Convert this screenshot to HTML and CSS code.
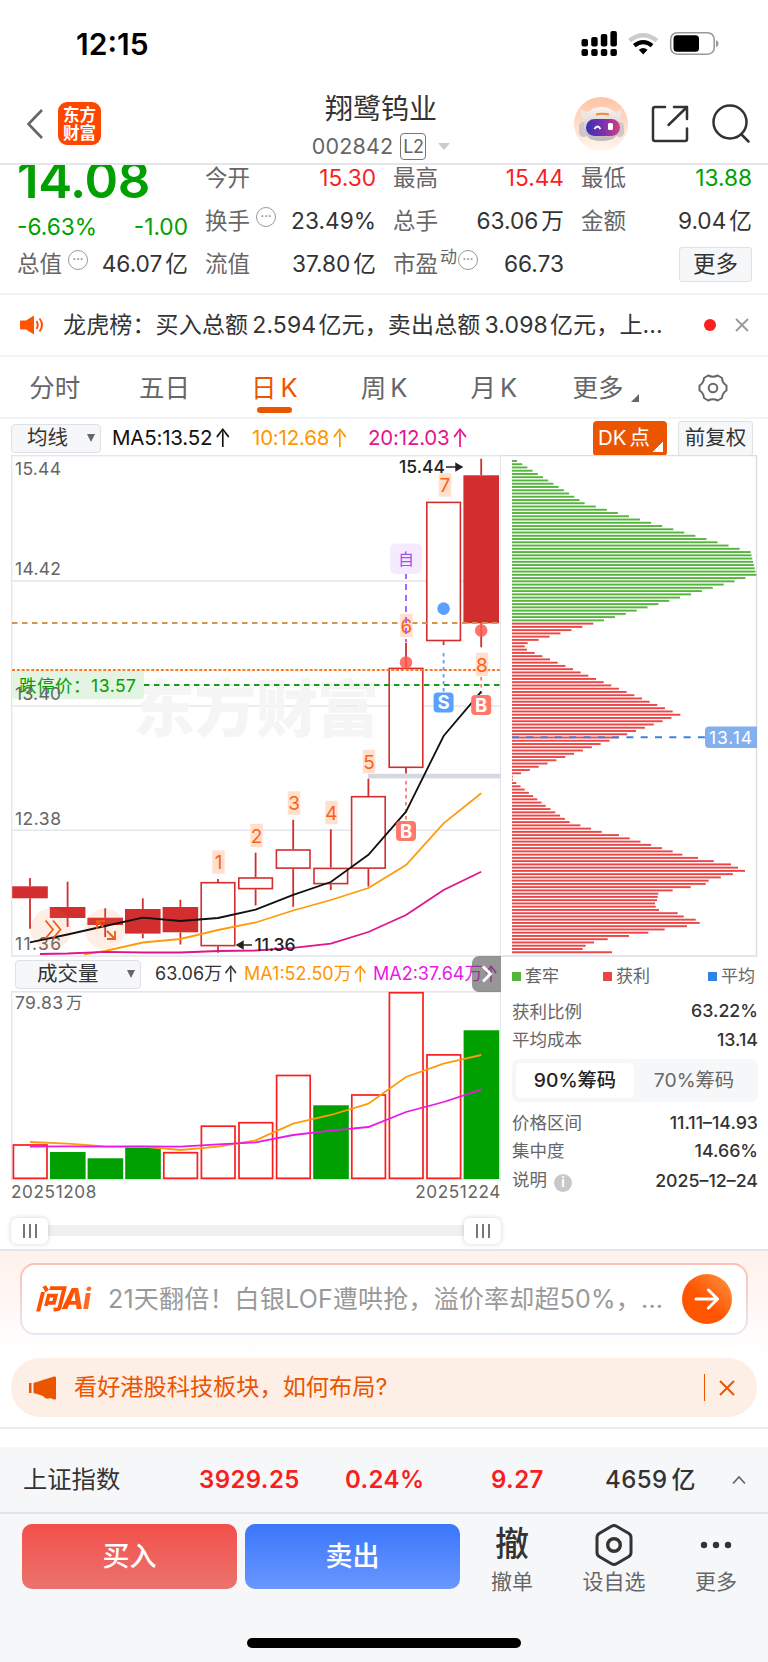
FILE: index.html
```html
<!DOCTYPE html>
<html lang="zh-CN">
<head>
    <meta charset="UTF-8">
    <meta name="viewport" content="width=device-width, initial-scale=1.0">
    <title>翔鹭钨业 002842</title>
    <link rel="stylesheet" href="styles.css">
</head>
<body>

    <div class="status-bar">
        <span class="clock">12:15</span>
        <svg class="status-icons" width="140" height="30" viewBox="580 29 140 30">
            <g fill="#000">
                <rect x="581.5" y="39" width="6.5" height="7.5" rx="2"/><rect x="591.2" y="37" width="6.5" height="9.5" rx="2"/>
                <rect x="600.8" y="34" width="6.5" height="12.5" rx="2"/><rect x="610.4" y="31" width="6.5" height="15.5" rx="2"/>
                <rect x="581.5" y="49" width="6.5" height="7" rx="2"/><rect x="591.2" y="49" width="6.5" height="7" rx="2"/>
                <rect x="600.8" y="49" width="6.5" height="7" rx="2"/><rect x="610.4" y="49" width="6.5" height="7" rx="2"/>
                <path d="M643.2 54.5l-4.4-4.7q4.4-3.4 8.8 0z"/>
            </g>
            <path d="M629.5 40.5q13.7-10.5 27.4 0" fill="none" stroke="#ccc" stroke-width="4.2"/>
            <path d="M634.3 45.7q8.9-7.2 17.8 0" fill="none" stroke="#000" stroke-width="4.2"/>
            <rect x="670.7" y="32.7" width="43.5" height="21.5" rx="6.5" fill="none" stroke="#999" stroke-width="1.6"/>
            <rect x="673.5" y="35.3" width="25.5" height="16.5" rx="3.5"/>
            <path d="M716 40q2.6 1 2.6 3.6t-2.6 3.6z" fill="#999"/>
        </svg>
    </div>

    <header class="nav">
        <div class="nav-left">
            <svg width="18" height="32" viewBox="0 0 18 32"><path d="M16 2L2.5 16 16 30" fill="none" stroke="#666" stroke-width="2.6"/></svg>
            <div class="logo"><span>东方</span><span>财富</span></div>
        </div>
        <div class="nav-title">
            <h1>翔鹭钨业</h1>
            <div class="code">002842<span class="level">L2</span><i class="caret"></i></div>
        </div>
        <div class="nav-right">
            <svg width="54" height="54" viewBox="0 0 54 54">
                <defs>
                    <linearGradient id="halo" x1="0" y1="0" x2="0" y2="1"><stop offset="0" stop-color="#ffc3a3"/><stop offset="1" stop-color="#fff6f1"/></linearGradient>
                    <linearGradient id="head" x1="0" y1="0" x2="0" y2="1"><stop offset="0" stop-color="#fbf6f3"/><stop offset="1" stop-color="#bdb6b8"/></linearGradient>
                    <linearGradient id="visor" x1="0" y1="0" x2="1" y2="0"><stop offset="0" stop-color="#3a32b0"/><stop offset="0.5" stop-color="#7a2fae"/><stop offset="1" stop-color="#d8407e"/></linearGradient>
                </defs>
                <circle cx="27" cy="27" r="27" fill="url(#halo)"/>
                <path d="M7 11q-2 7 3 12l7-9q-8 2-10-3zM47 11q2 7-3 12l-7-9q8 2 10-3z" fill="#efe6e4"/>
                <rect x="5" y="25" width="9" height="15" rx="4.5" fill="#cfc8cb"/><rect x="41" y="25" width="9" height="15" rx="4.500" fill="#cfc8cb"/>
                <path d="M27.500 10C15 10 10 19 10 29s5 15 17.500 15S45 39 45 29 40 10 27.500 10z" fill="url(#head)"/>
                <rect x="12" y="22" width="34" height="17" rx="8.500" fill="url(#visor)"/>
                <path d="M22 17.500q6-1.500 13 0" stroke="#f58a2e" stroke-width="2.200" fill="none"/>
                <path d="M20.500 32q3-5 6 0" stroke="#fff" stroke-width="1.800" fill="none"/>
                <rect x="34" y="26" width="5" height="7" rx="1.500" fill="#fff"/>
            </svg>
            <svg width="38" height="38" viewBox="0 0 38 38" fill="none" stroke="#333" stroke-width="2.5" stroke-linecap="round" stroke-linejoin="round">
                <path d="M14 2H4a2 2 0 0 0-2 2v30a2 2 0 0 0 2 2h30a2 2 0 0 0 2-2V23.500M23 2h13v12M36 2L17.500 20"/>
            </svg>
            <svg width="39" height="39" viewBox="0 0 39 39" fill="none" stroke="#333" stroke-width="2.5" stroke-linecap="round">
                <circle cx="18" cy="18" r="16.500"/><path d="M29.500 30.500l7 7"/>
            </svg>
        </div>
    </header>

    <section class="quote">
        <div class="price-col">
            <div class="price green">14.08</div>
            <div class="pair change green"><span>-6.63%</span><span>-1.00</span></div>
            <div class="pair"><label>总值<i class="more-dot">···</i></label><span>46.07<em>亿</em></span></div>
        </div>
        <div class="quote-col">
            <div class="pair"><label>今开</label><span class="red">15.30</span></div>
            <div class="pair"><label>换手<i class="more-dot">···</i></label><span>23.49%</span></div>
            <div class="pair"><label>流值</label><span>37.80<em>亿</em></span></div>
        </div>
        <div class="quote-col">
            <div class="pair"><label>最高</label><span class="red">15.44</span></div>
            <div class="pair"><label>总手</label><span>63.06<em>万</em></span></div>
            <div class="pair"><label>市盈<sup>动</sup><i class="more-dot tight">···</i></label><span>66.73</span></div>
        </div>
        <div class="quote-col">
            <div class="pair"><label>最低</label><span class="green">13.88</span></div>
            <div class="pair"><label>金额</label><span>9.04<em>亿</em></span></div>
            <div class="pair end"><button class="box-btn">更多</button></div>
        </div>
    </section>

    <section class="ticker">
        <svg width="24" height="22" viewBox="0 0 24 22"><path d="M1 6.500h5L14 1.500v19l-8-5H1q-1 0-1-1v-7q0-1 1-1z" fill="#f50"/><path d="M16.500 7q2.500 4 0 8M19.500 4.500q5 6.500 0 13" fill="none" stroke="#f50" stroke-width="2"/></svg>
        <p>龙虎榜：买入总额<b>2.594</b>亿元，卖出总额<b>3.098</b>亿元，上...</p>
        <i class="dot"></i>
        <svg width="14" height="14" viewBox="0 0 14 14"><path d="M1 1l12 12M13 1L1 13" stroke="#999" stroke-width="1.800"/></svg>
    </section>

    <nav class="tabs">
        <span>分时</span>
        <span>五日</span>
        <span class="active">日<b>K</b></span>
        <span>周<b>K</b></span>
        <span>月<b>K</b></span>
        <span class="more">更多<i class="corner"></i></span>
        <span><svg width="30" height="30" viewBox="0 0 30 30" fill="none" stroke="#666" stroke-width="2"><path d="M10.200 2.500Q15 5 19.800 2.500L24 5Q24.300 10 28.500 12.500V17.500Q24.300 20 24 25L19.800 27.500Q15 25 10.200 27.500L6 25Q5.700 20 1.500 17.500V12.500Q5.700 10 6 5Z" stroke-linejoin="round"/><circle cx="15" cy="15" r="4.300"/></svg></span>
    </nav>

    <section class="ma-bar">
        <button class="select">均线<i></i></button>
        <span class="ma5">MA5:13.52<i class="up">↑</i></span>
        <span class="ma10">10:12.68<i class="up">↑</i></span>
        <span class="ma20">20:12.03<i class="up">↑</i></span>
        <button class="dk">DK<em>点</em></button>
        <button class="box-btn adj">前复权</button>
    </section>

    <main class="charts">
        <div class="left">
            <svg id="kline" width="490" height="502" viewBox="11 455 490 502"></svg>
            <div class="vol-head">
                <button class="select wide">成交量<i></i></button>
                <span class="v0">63.06万<i class="up">↑</i></span>
                <span class="v1">MA1:52.50万<i class="up">↑</i></span>
                <span class="v2">MA2:37.64万<i class="up">↑</i></span>
                <div class="next"><svg width="12" height="18" viewBox="0 0 12 18"><path d="M2 1.500L9.500 9 2 16.500" fill="none" stroke="#fff" stroke-width="2.800"/></svg></div>
            </div>
            <svg id="volume" width="490" height="190" viewBox="11 991 490 190"></svg>
            <div class="dates"><span>20251208</span><span>20251224</span></div>
            <div class="slider"><i class="handle"></i><i class="handle"></i></div>
        </div>

        <div class="right">
            <svg id="chips" width="257" height="502" viewBox="501 455 257 502"></svg>
            <div class="legend">
                <span><i class="bg-green"></i>套牢</span>
                <span><i class="bg-red"></i>获利</span>
                <span><i class="bg-blue"></i>平均</span>
            </div>
            <div class="stat"><label>获利比例</label><b>63.22%</b></div>
            <div class="stat"><label>平均成本</label><b>13.14</b></div>
            <div class="segment"><span class="on">90%筹码</span><span>70%筹码</span></div>
            <div class="stat"><label>价格区间</label><b>11.11–14.93</b></div>
            <div class="stat"><label>集中度</label><b>14.66%</b></div>
            <div class="stat last"><label>说明<i class="info">i</i></label><b>2025–12–24</b></div>
        </div>
    </main>

    <section class="ai">
        <div class="ai-box">
            <span class="ai-logo">问Ai</span>
            <p>21天翻倍！白银LOF遭哄抢，溢价率却超50%，...</p>
            <div class="go"><svg width="26" height="22" viewBox="0 0 26 22" fill="none" stroke="#fff" stroke-width="3" stroke-linecap="round" stroke-linejoin="round"><path d="M2 11h21M14.500 2L23.500 11l-9 9"/></svg></div>
        </div>
    </section>

    <section class="promo">
        <svg width="28" height="24" viewBox="0 0 28 24" fill="#eb5500"><rect x="0" y="7" width="2.500" height="10"/><path d="M4.500 7L25 0.500Q27 0 27 1.500V22.500Q27 24 25 23.500L21 22Q17 24 14 20L8 18 4.500 17z"/></svg>
        <p>看好港股科技板块，如何布局?</p>
        <i class="bar"></i>
        <svg width="16" height="16" viewBox="0 0 16 16"><path d="M1 1l14 14M15 1L1 15" stroke="#eb5500" stroke-width="1.900"/></svg>
    </section>

    <footer>
        <div class="index-row">
            <span class="name">上证指数</span>
            <b class="red i1">3929.25</b>
            <b class="red i2">0.24%</b>
            <b class="red i3">9.27</b>
            <b class="i4">4659<em>亿</em></b>
            <svg width="14" height="10" viewBox="0 0 14 10"><path d="M1 8.500L7 2l6 6.500" fill="none" stroke="#666" stroke-width="1.800"/></svg>
        </div>
        <div class="actions">
            <button class="buy">买入</button>
            <button class="sell">卖出</button>
            <div class="act"><strong>撤</strong><span>撤单</span></div>
            <div class="act">
                <svg width="40" height="44" viewBox="0 0 40 44" fill="none" stroke="#333" stroke-linejoin="round"><path d="M17.500 3.300q2.500-1.400 5 0L34.500 10.300q2.500 1.500 2.500 4.200v15q0 2.700-2.500 4.200L22.500 40.700q-2.500 1.400-5 0L5.500 33.700Q3 32.200 3 29.500v-15q0-2.700 2.500-4.200z" stroke-width="3"/><circle cx="20" cy="22" r="6.300" stroke-width="3.400"/></svg>
                <span>设自选</span>
            </div>
            <div class="act">
                <svg width="40" height="44" viewBox="0 0 40 44" fill="#333"><circle cx="8" cy="22" r="3.200"/><circle cx="20" cy="22" r="3.200"/><circle cx="32" cy="22" r="3.200"/></svg>
                <span>更多</span>
            </div>
        </div>
        <div class="home"></div>
    </footer>

    <script src="script.js"></script>
</body>
</html>
```

FILE: styles.css
```css
* {
    box-sizing: border-box;
    margin: 0;
    padding: 0;
}

body {
    width: 768px;
    background: #fff;
    color: #333;
    font-family: Inter, 'Noto Sans CJK SC', sans-serif;
    font-size: 23px;
    line-height: 1;
}

button {
    font: inherit;
    color: inherit;
    border: none;
}

i, em {
    font-style: normal;
}

svg {
    display: block;
    flex: none;
}

.red { color: #fa1e1e; }
.green { color: #00a000; }

.up {
    display: inline-block;
    margin-left: 2px;
    transform: scaleY(1.25);
}

/* status bar + nav */
.status-bar {
    height: 82px;
    padding: 29px 48px 0 76px;
    display: flex;
    justify-content: space-between;
}

.clock {
    font-size: 30px;
    font-weight: 600;
    line-height: 30px;
    color: #000;
}

.nav {
    height: 83px;
    padding: 0 17px 0 26px;
    display: grid;
    grid-template-columns: 275px 160px 1fr;
    border-bottom: 2px solid #e6e6e8;
}

.nav-left {
    display: flex;
    align-items: center;
    gap: 14px;
    height: 83px;
}

.logo {
    width: 43px;
    height: 43px;
    border-radius: 9px;
    background: #ff4600;
    color: #fff;
    font-size: 16.5px;
    font-weight: 700;
    display: flex;
    flex-direction: column;
    align-items: center;
    justify-content: center;
    line-height: 18px;
}

.nav-title {
    display: flex;
    flex-direction: column;
    align-items: center;
    white-space: nowrap;
}

.nav-title h1 {
    font-size: 28px;
    font-weight: 400;
    line-height: 36px;
    margin-top: 9px;
}

.code {
    display: flex;
    align-items: center;
    font-size: 21.5px;
    color: #666;
    letter-spacing: 0.2px;
    margin-top: 6px;
}

.level {
    width: 26px;
    height: 27px;
    border: 1.5px solid #777;
    border-radius: 4px;
    margin-left: 7px;
    display: grid;
    place-items: center;
    font-size: 18px;
    letter-spacing: -0.5px;
}

.caret {
    border: 6.5px solid transparent;
    border-top: 7px solid #ccc;
    border-bottom: none;
    margin-left: 12px;
}

.nav-right {
    display: flex;
    align-items: center;
    justify-content: flex-end;
    gap: 23px;
    height: 83px;
}

/* quote */
.quote {
    height: 130px;
    padding: 0 16px 0 17px;
    display: grid;
    grid-template-columns: repeat(4, 1fr);
    gap: 17px;
    overflow: hidden;
    border-bottom: 2px solid #f3f4f6;
}

.pair {
    height: 43px;
    display: flex;
    align-items: center;
    justify-content: space-between;
    white-space: nowrap;
}

.quote-col,
.price-col {
    margin-top: -8px;
}

.price {
    font-size: 51px;
    font-weight: 600;
    height: 43px;
    line-height: 45px;
    letter-spacing: -0.4px;
}

.pair.change {
    height: 49px;
    padding-top: 6px;
    margin-bottom: -6px;
}

.pair label {
    color: #666;
    display: flex;
    align-items: center;
    font-size: 22.5px;
}

.pair span {
    font-size: 22.7px;
}

.pair em {
    margin-left: 3px;
}

.pair.end {
    justify-content: flex-end;
}

.more-dot {
    width: 20px;
    height: 20px;
    border: 1.6px solid #999;
    border-radius: 50%;
    margin: 0 0 10px 6px;
    color: #888;
    font-size: 11px;
    font-weight: 700;
    display: grid;
    place-items: center;
    line-height: 1;
}

.more-dot.tight {
    margin-left: 1px;
}

.pair sup {
    font-size: 17px;
    margin-bottom: 14px;
    margin-left: 2px;
}

.box-btn {
    width: 73px;
    height: 35px;
    background: #f6f7f9;
    border: 1.5px solid #dfe1e6;
    border-radius: 3px;
    font-size: 22.5px;
}

/* ticker */
.ticker {
    height: 62px;
    padding: 0 19px 0 20px;
    display: flex;
    align-items: center;
    border-bottom: 2px solid #f3f4f6;
}

.ticker p {
    flex: 1;
    margin-left: 19px;
    font-size: 23px;
    letter-spacing: 0.15px;
    white-space: nowrap;
}

.ticker b {
    font-weight: 400;
    margin: 0 2px 0 4px;
}

.dot {
    width: 12px;
    height: 12px;
    border-radius: 50%;
    background: #fa1e1e;
    margin-right: 19px;
}

/* tabs */
.tabs {
    height: 62px;
    display: grid;
    grid-template-columns: repeat(7, 1fr);
    border-bottom: 2px solid #f3f4f6;
    color: #666;
    font-size: 25.5px;
}

.tabs span {
    display: flex;
    align-items: center;
    justify-content: center;
    position: relative;
    padding-top: 2px;
}

.tabs b {
    font-weight: 400;
    margin-left: 4px;
}

.tabs .more {
    padding-left: 5px;
}

.tabs .active {
    color: #eb5500;
}

.tabs .active::after {
    content: '';
    position: absolute;
    left: 38px;
    bottom: 4px;
    width: 35px;
    height: 6px;
    border-radius: 3px;
    background: #eb5500;
}

.corner {
    border: 4px solid #666;
    border-left-color: transparent;
    border-top-color: transparent;
    margin: 20px 0 0 8px;
}

/* ma legend */
.ma-bar {
    height: 36px;
    padding: 2px 15px 0 11px;
    display: flex;
    align-items: center;
    font-size: 20.5px;
    white-space: nowrap;
}

.select {
    width: 90px;
    height: 29px;
    background: #f6f7f9;
    border: 1.5px solid #dfe1e6;
    border-radius: 4px;
    font-size: 20.5px;
    display: flex;
    align-items: center;
    justify-content: space-between;
    padding: 0 5px 0 15px;
}

.select i {
    border: 4.5px solid transparent;
    border-top: 8px solid #666;
    border-bottom: none;
}

.ma5, .ma10, .ma20 {
    letter-spacing: -0.2px;
}

.ma5 { width: 140px; margin-left: 11px; color: #111; }
.ma10 { width: 116px; color: #ff9600; }
.ma20 { flex: 1; color: #e6148c; }

.dk {
    width: 74px;
    height: 35px;
    border-radius: 4px;
    background: linear-gradient(135deg, transparent 50%, #fff 50%) right 4px bottom 4px / 10px 10px no-repeat #eb5500;
    color: #fff;
    font-size: 20.5px;
    text-align: left;
    padding-left: 5px;
}

.dk em {
    margin-left: 3px;
}

.box-btn.adj {
    width: 75px;
    font-size: 20.5px;
    margin-left: 11px;
}

/* charts */
.charts {
    display: grid;
    grid-template-columns: 490px 257px;
    padding-left: 11px;
    height: 796px;
    border-bottom: 2px solid #e4e5ea;
}

.vol-head {
    height: 34px;
    display: flex;
    align-items: center;
    position: relative;
    font-size: 18px;
    white-space: nowrap;
}

.vol-head .up {
    margin-left: 1px;
}

.select.wide {
    width: 126px;
    margin-left: 4px;
    padding-left: 21px;
}

.v0 { width: 89px; margin-left: 14px; }
.v1 { width: 129px; color: #ff9600; }
.v2 { color: #e619e6; }

.next {
    position: absolute;
    right: 0;
    top: -1px;
    width: 29px;
    height: 36px;
    border-radius: 7px 0 0 7px;
    background: rgba(80, 80, 80, 0.6);
    display: grid;
    place-items: center;
}

.dates {
    height: 24px;
    display: flex;
    align-items: center;
    justify-content: space-between;
    padding-bottom: 3px;
    font-size: 17.2px;
    color: #666;
    letter-spacing: 0.6px;
}

.slider {
    height: 11px;
    margin-top: 20px;
    background: #f0f0f3;
    display: flex;
    align-items: center;
    justify-content: space-between;
}

.handle {
    width: 37px;
    height: 26px;
    border-radius: 6px;
    background: linear-gradient(#777, #777) 12px 6px / 2px 14px no-repeat,
        linear-gradient(#777, #777) 18px 6px / 2px 14px no-repeat,
        linear-gradient(#777, #777) 24px 6px / 2px 14px no-repeat, #fff;
    box-shadow: 0 0 5px rgba(0, 0, 0, 0.18);
}

svg text {
    font-family: Inter, 'Noto Sans CJK SC', sans-serif;
}

.right {
    font-size: 17.5px;
    color: #666;
}

.legend, .stat {
    margin-left: 11px;
    display: flex;
    align-items: center;
    justify-content: space-between;
    height: 28.6px;
}

.legend {
    display: grid;
    grid-template-columns: 91px 105px auto;
    justify-content: start;
    height: 38px;
    margin-bottom: 2px;
}

.legend span {
    display: flex;
    align-items: center;
    font-size: 17px;
}

.legend i {
    width: 9px;
    height: 9px;
    margin-right: 4px;
}

.bg-green { background: #55b43c; }
.bg-red { background: #eb4646; }
.bg-blue { background: #2d82e6; }

.stat b {
    font-weight: 500;
    font-size: 17.8px;
    color: #333;
}

.stat.last {
    height: 32px;
}

.info {
    display: inline-grid;
    place-items: center;
    width: 18px;
    height: 18px;
    border-radius: 50%;
    background: #c8c8c8;
    color: #fff;
    font-size: 13px;
    font-weight: 700;
    margin-left: 7px;
    vertical-align: -1px;
}

.segment {
    margin: 5px 0 6px 11px;
    height: 43px;
    padding: 4px;
    border-radius: 7px;
    background: #f6f7f9;
    display: grid;
    grid-template-columns: 118px 1fr;
    font-size: 19.3px;
}

.segment span {
    display: grid;
    place-items: center;
    border-radius: 5px;
}

.segment .on {
    background: #fff;
    color: #222;
    font-weight: 500;
}

/* ai search */
.ai {
    height: 107px;
    padding: 12px 20px 0;
    background: linear-gradient(#fff1ec, #fff);
}

.ai-box {
    height: 72px;
    padding: 0 14px 0 13px;
    border: 2px solid transparent;
    border-radius: 15px;
    background: linear-gradient(#fff, #fff) padding-box, linear-gradient(#ffbeb2, #e3e9f8) border-box;
    display: flex;
    align-items: center;
}

.ai-logo {
    width: 73px;
    font-size: 28px;
    font-weight: 800;
    font-style: italic;
    letter-spacing: -0.8px;
    white-space: nowrap;
    background: linear-gradient(90deg, #ff5000 50%, #ff8c50);
    -webkit-background-clip: text;
    color: transparent;
    line-height: 36px;
}

.ai-box p {
    flex: 1;
    font-size: 25px;
    letter-spacing: 0.2px;
    color: #999;
    white-space: nowrap;
}

.go {
    width: 50px;
    height: 50px;
    border-radius: 50%;
    background: linear-gradient(45deg, #ff5500 45%, #ff9646);
    display: grid;
    place-items: center;
}

/* promo */
.promo {
    height: 59px;
    margin: 0 11px;
    padding: 0 22px 0 18px;
    border-radius: 29px;
    background: #fdeee6;
    color: #eb5500;
    display: flex;
    align-items: center;
}

.promo p {
    flex: 1;
    margin-left: 17px;
    font-size: 23.2px;
}

.bar {
    width: 1.5px;
    height: 27px;
    background: #eb5500;
    margin-right: 14px;
}

/* bottom */
footer {
    height: 235px;
    margin-top: 10px;
    padding-top: 18px;
    border-top: 2px solid #ececee;
    background: #f6f7f9;
    background-clip: content-box;
}

.index-row {
    height: 67px;
    padding: 0 22px 0 23px;
    border-bottom: 2px solid #e2e3e6;
    display: flex;
    align-items: center;
    font-size: 24px;
}

.index-row b {
    font-weight: 600;
    letter-spacing: 0.4px;
}

.index-row em {
    font-weight: 500;
    margin-left: 4px;
}

.name { width: 176px; font-size: 24.3px; }
.i1 { width: 146px; }
.i2 { width: 146px; }
.i3 { width: 114px; }
.i4 { flex: 1; }

.index-row .i4 {
    font-weight: 500;
}

.actions {
    padding: 10px 0 0 22px;
    display: grid;
    grid-template-columns: 215px 215px 102px 102px 102px;
    height: 124px;
}

.actions button {
    width: 215px;
    height: 65px;
    border-radius: 10px;
    color: #fff;
    font-size: 27px;
    font-weight: 500;
}

.actions .buy {
    background: linear-gradient(#f2504a, #ec736e);
}

.actions .sell {
    margin-left: 8px;
    background: linear-gradient(#3a76fa, #6a97ff);
}

.act {
    display: flex;
    flex-direction: column;
    align-items: center;
    font-size: 21px;
    color: #666;
    white-space: nowrap;
    margin-left: 17px;
    width: 86px;
}

.act strong {
    height: 43px;
    line-height: 40px;
    font-size: 34px;
    font-weight: 500;
    color: #333;
}

.act svg {
    margin-top: -1px;
}

.act span {
    margin-top: 4px;
}

.home {
    width: 274px;
    height: 10px;
    border-radius: 5px;
    background: #000;
    margin: 0 auto;
}
```

FILE: script.js
```javascript
const kline = document.getElementById('kline');
const volume = document.getElementById('volume');
const chips = document.getElementById('chips');

const X0 = 30;
const STEP = 37.6;
const HALF = 17.8;
const cx = i => X0 + STEP * i;

const rect = (x, y, w, h, attrs) => `<rect x="${x}" y="${y}" width="${w}" height="${h}" ${attrs}/>`;
const line = (x1, y1, x2, y2, attrs) => `<line x1="${x1}" y1="${y1}" x2="${x2}" y2="${y2}" ${attrs}/>`;
const text = (x, y, s, attrs) => `<text x="${x}" y="${y}" ${attrs}>${s}</text>`;
const poly = (pts, color) => `<polyline points="${pts.map(p => p.join(',')).join(' ')}" fill="none" stroke="${color}" stroke-width="1.8"/>`;
const series = (ys, from = 0) => ys.map((y, i) => [cx(i + from), y]);

// high, body top, body bottom, low, filled
const candles = [
    [878, 886.3, 898.3, 928.7, 1],
    [881.7, 907, 918, 927, 1],
    [908.3, 917.7, 925, 937, 1],
    [898.3, 909, 933.6, 938.3, 1],
    [899.7, 907, 932.3, 944.5, 1],
    [879, 882, 946.3, 952.8, 0],
    [852.7, 877.3, 889.3, 905.5, 0],
    [819.8, 849.3, 868.8, 906.8, 0],
    [829.3, 867.7, 884.3, 890, 0],
    [778.7, 796, 868.8, 886.5, 0],
    [642.7, 667.7, 768, 773.5, 0],
    [501.7, 501.7, 641.2, 645, 0],
    [458.7, 475.3, 623.3, 647.3, 1]
];

function drawKline() {
    const grid = 'stroke="#e4e6ee" stroke-width="1.6"';
    let s = '';
    s += rect(11.6, 455.6, 489, 500.4, `fill="none" ${grid}`);
    [581, 706, 830.3].forEach(y => s += line(11, y, 501, y, grid));

    s += text(133, 732, '东方财富', 'font-size="62" font-weight="900" fill="#f5f5f6" textLength="246"');
    s += rect(368, 773.8, 133, 4.6, 'fill="#d5d8de"');

    s += rect(12, 671, 132, 28, 'rx="3" fill="#e3f4e3"');
    s += text(19, 691.5, '跌停价：13.57', 'font-size="17.5" fill="#00a000" textLength="117"');

    const label = 'font-size="17.5" fill="#666" textLength="46"';
    [['15.44', 475], ['14.42', 575], ['13.40', 700], ['12.38', 825], ['11.36', 950]].forEach(l => s += text(15, l[1], l[0], label));

    candles.forEach(([hi, top, bot, lo, fill], i) => {
        const x = cx(i);
        s += line(x, hi, x, top, 'stroke="#d22d2f" stroke-width="1.8"');
        s += line(x, bot, x, lo, 'stroke="#d22d2f" stroke-width="1.8"');
        if (fill) {
            s += rect(x - HALF, top, HALF * 2, bot - top, 'fill="#d22d2f"');
        } else {
            s += rect(x - HALF + 1, top + 0.7, HALF * 2 - 2, bot - top - 1.4, 'fill="#fff" stroke="#d22d2f" stroke-width="1.6"');
        }
    });

    // limit and cost lines
    s += line(12, 623, 501, 623, 'stroke="#d29650" stroke-width="1.8" stroke-dasharray="5.500 4.500"');
    s += line(12, 670, 501, 670, 'stroke="#ff7828" stroke-width="1.8" stroke-dasharray="3 1.800"');
    s += line(144, 685, 501, 685, 'stroke="#14a014" stroke-width="1.8" stroke-dasharray="5.500 4.500"');
    s += line(443.6, 653, 443.6, 693, 'stroke="#5aa0ff" stroke-width="1.8" stroke-dasharray="3.500 3.500"');
    s += line(406, 781, 406, 822, 'stroke="#ff7864" stroke-width="1.8" stroke-dasharray="3.500 3.500"');
    s += line(481.2, 656, 481.2, 694, 'stroke="#ff7864" stroke-width="1.8" stroke-dasharray="3.500 3.500"');

    // sequence numbers
    [[218.5, 862], [256.5, 835.5], [294, 803], [331.5, 812.5], [369, 761.5], [406.5, 625.5], [445, 485], [482, 664.5]].forEach(([x, y], i) => {
        s += rect(x - 6.2, y - 11.7, 12.4, 23.4, 'fill="#ffdcc8" fill-opacity="0.9"');
        s += text(x, y + 7, i + 1, 'font-size="19" fill="#ff5f14" text-anchor="middle"');
    });
    s += line(406, 573, 406, 642, 'stroke="#a864ff" stroke-width="2" stroke-dasharray="6 5"');

    s += '<circle cx="51" cy="929" r="20.500" fill="#f5783c" fill-opacity="0.13"/><circle cx="105" cy="929" r="20.500" fill="#f5783c" fill-opacity="0.13"/>';
    s += poly(series([942.3, 934.5, 926, 917.7, 921, 918, 909.7, 894.8, 882, 854.8, 811.7, 736, 691.7]), '#111');
    s += poly([[84, 954.3], ...series([951, 942.5, 939, 930, 922.5, 910.5, 900, 888, 865, 823.3, 793.3], 2)], '#ff9b0a');
    s += poly([[40, 954], ...series([953.5, 951.8, 952.5, 952.5, 951, 950.5, 947.8, 943.7, 932, 915, 890, 871.7], 1)], '#e1148c');

    s += '<path d="M45.500 920.500l7.500 9-7.500 9M53 920.500l7.500 9-7.500 9" fill="none" stroke="#f05a14" stroke-width="1.800"/>';
    s += '<path d="M97 929v-8h8M97 921l6 6M115 931v8h-8M115 939l-8-8" fill="none" stroke="#f05a14" stroke-width="1.800"/>';

    s += '<circle cx="443.600" cy="608.600" r="6.300" fill="#5aa0ff"/>';
    s += '<circle cx="406" cy="662.500" r="6.300" fill="#ff5a50" fill-opacity="0.85"/><circle cx="481.200" cy="630.500" r="6.300" fill="#ff5a50" fill-opacity="0.85"/>';

    [['S', 443.6, 702.5, '#5aa0ff'], ['B', 406, 831, '#ff7869'], ['B', 481.2, 705, '#ff7869']].forEach(([c, x, y, color]) => {
        s += rect(x - 10, y - 10, 20, 20, `rx="4" fill="${color}"`);
        s += text(x, y + 6.5, c, 'font-size="18.5" font-weight="700" fill="#fff" text-anchor="middle"');
    });
    s += rect(390, 543.5, 32, 30.5, 'rx="6" fill="#f5ebff"');
    s += text(406, 565, '自', 'font-size="16" fill="#a050f0" text-anchor="middle"');

    const mark = 'font-size="17.5" font-weight="500" fill="#222"';
    s += text(399, 473, '15.44', mark + ' textLength="46"');
    s += '<path d="M446 467h14M456 463.500l6 3.500-6 3.500z" fill="#222" stroke="#222" stroke-width="1.400"/>';
    s += text(254.5, 951, '11.36', mark + ' textLength="41"');
    s += '<path d="M252 945h-12M243 941.500l-6 3.500 6 3.500z" fill="#222" stroke="#222" stroke-width="1.400"/>';
    kline.innerHTML = s;
}

function drawVolume() {
    // top of each bar, 1 = green
    const bars = [[1144.3, 0], [1152, 1], [1158.3, 1], [1147.5, 1], [1152, 0], [1125.5, 0], [1122, 0], [1074.8, 0], [1105.3, 1], [1094.3, 0], [992, 0], [1054.2, 0], [1030.3, 1]];
    const bottom = 1179;
    let s = rect(11.6, 991.8, 489, 187.7, 'fill="none" stroke="#e4e6ee" stroke-width="1.6"');
    s += text(15, 1009, '79.83', 'font-size="17.5" fill="#666" textLength="48"') + text(66, 1009, '万', 'font-size="16.5" fill="#666"');
    bars.forEach(([top, green], i) => {
        const x = cx(i) + 0.2;
        if (green) {
            s += rect(x - HALF, top, HALF * 2, bottom - top, 'fill="#00a000"');
        } else {
            s += rect(x - HALF + 1, top + 0.7, HALF * 2 - 2, bottom - top - 1.4, 'fill="#fff" stroke="#fa1e1e" stroke-width="1.7"');
        }
    });
    s += poly(series([576, 581, 589, 590, 600, 590, 571, 521, 495, 461, 381, 341, 315].map(v => 950 + v / 3)), '#ff9b0a');
    s += poly(series([590, 589, 590, 589, 590, 583, 577, 555, 542, 531, 486, 456, 419].map(v => 950 + v / 3)), '#e619e6');
    volume.innerHTML = s;
}

function drawChips() {
    // [row, bar length] turning points, rows between them are interpolated
    const keys = [[0, 5], [13, 72.7], [28, 238.7], [35, 244.3], [49, 92], [50, 81.3], [56, 15.7], [57, 12.7], [58, 15], [59, 22.7], [78, 168.3],
        [96, 9], [97, 0.8], [98, 0.8], [99, 4.3], [106, 33.7], [111, 57.7], [114, 89.7], [115, 107], [120, 160.7], [121, 170.3], [122, 186],
        [123, 201.7], [124, 219], [126, 233], [129, 196.7], [130, 193.7], [131, 178.7], [132, 160.7], [133, 146.3], [135, 145], [136, 143],
        [137, 143.7], [138, 147], [139, 165.7], [140, 171.7], [141, 183.7], [142, 187.7], [143, 175], [144, 152.7], [145, 136.3],
        [146, 117], [147, 95.7], [148, 82], [149, 73.7], [150, 70.7], [151, 100]];
    let s = '<path d="M501 455.600H756.500V956H501" fill="none" stroke="#dcdee6" stroke-width="1.500"/>';
    let k = 0;
    for (let i = 0; i <= 151; i++) {
        while (i > keys[k + 1][0]) k++;
        const [a, va] = keys[k];
        const [b, vb] = keys[k + 1];
        const w = va + (vb - va) * (i - a) / (b - a);
        s += rect(512, 460 + i * 3.2535, w, 1.9, `fill="${i < 50 ? '#55b43c' : '#eb4646'}"`);
    }
    s += line(512, 737.3, 706, 737.3, 'stroke="#3c82dc" stroke-width="1.9" stroke-dasharray="7 7.300"');
    s += '<path d="M757 726.500H709q-4 0-4 4V744q0 4 4 4H757z" fill="#82b0ee"/>';
    s += text(709, 744, '13.14', 'font-size="17.500" fill="#fff" textLength="43"');
    chips.innerHTML = s;
}

drawKline();
drawVolume();
drawChips();
```
